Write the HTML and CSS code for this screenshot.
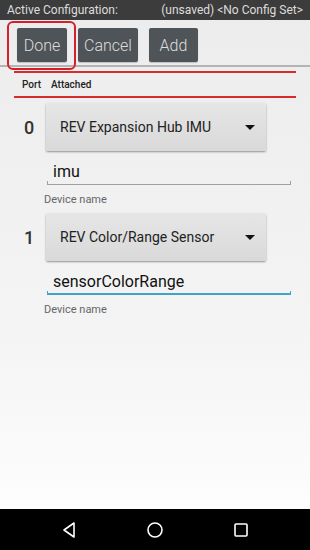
FILE: index.html
```html
<!DOCTYPE html>
<html>
<head>
<meta charset="utf-8">
<link rel="stylesheet" href="styles.css">
</head>
<body>
<div class="screen">
  <div class="statusbar">
    <span>Active Configuration:</span>
    <span>(unsaved) &lt;No Config Set&gt;</span>
  </div>
  <div class="toolbar">
    <button class="btn btn-done">Done</button>
    <button class="btn btn-cancel">Cancel</button>
    <button class="btn btn-add">Add</button>
    <div class="highlight"></div>
  </div>
  <div class="divider"></div>
  <div class="header">
    <div class="redline"></div>
    <div class="cols"><span class="col-port">Port</span><span>Attached</span></div>
    <div class="redline"></div>
  </div>
  <div class="content">
    <div class="row">
      <div class="line">
        <div class="port">0</div>
        <div class="spinner"><span>REV Expansion Hub IMU</span><span class="arrow"></span></div>
      </div>
      <div class="edit">imu</div>
      <div class="hint">Device name</div>
    </div>
    <div class="row">
      <div class="line">
        <div class="port">1</div>
        <div class="spinner"><span>REV Color/Range Sensor</span><span class="arrow"></span></div>
      </div>
      <div class="edit focused">sensorColorRange</div>
      <div class="hint">Device name</div>
    </div>
  </div>
  <div class="navbar">
    <svg class="nav-icon" width="16" height="18" viewBox="0 0 16 18"><path d="M13 2 L3 9 L13 16 Z" fill="none" stroke="#fff" stroke-width="1.6" stroke-linejoin="round"/></svg>
    <svg class="nav-icon" width="18" height="18" viewBox="0 0 18 18"><circle cx="9" cy="9" r="7" fill="none" stroke="#fff" stroke-width="1.6"/></svg>
    <svg class="nav-icon" width="16" height="16" viewBox="0 0 16 16"><rect x="2" y="2" width="12" height="12" rx="1" fill="none" stroke="#fff" stroke-width="1.6"/></svg>
  </div>
</div>
</body>
</html>
```
FILE: styles.css
```css
* { box-sizing: border-box; }
html, body { margin: 0; padding: 0; }
body { font-family: Roboto, "Liberation Sans", sans-serif; }
.screen {
  width: 310px; height: 550px;
  display: flex; flex-direction: column;
  background: linear-gradient(#ececec, #f4f4f4 60%, #ffffff);
  overflow: hidden;
}
.statusbar {
  height: 20px; background: #3c3c3c; color: #dcdcdc;
  font-size: 12px; display: flex; justify-content: space-between; align-items: center;
  padding: 0 7px 0 7px;
}
.toolbar {
  position: relative;
  height: 45px; padding: 8px 0 0 17px;
  display: flex; gap: 11px; align-items: flex-start;
}
.btn {
  height: 34px; border: none; border-radius: 2px;
  background: #4f5458; color: #dedede;
  font-family: Roboto, "Liberation Sans", sans-serif; font-size: 16px; font-weight: 300;
  padding: 0; box-shadow: 0 1px 1px rgba(0,0,0,0.2);
}
.btn-done { width: 50px; }
.btn-cancel { width: 60px; }
.btn-add { width: 49px; }
.highlight {
  position: absolute; left: 7px; top: 1px; width: 69px; height: 49px;
  border: 2px solid #d3202e; border-radius: 6px;
}
.divider { height: 2px; background: #b4b4b4; }
.header { padding: 4px 14px 0 14px; }
.redline { height: 2px; background: #d82a2f; }
.cols {
  height 23px; height: 23px; display: flex; align-items: center;
  font-size: 10px; font-weight: 500; color: #222; padding-left: 8px;
}
.col-port { width: 29px; }
.content { flex: 1; padding-top: 5px; }
.row { height: 110px; }
.line { display: flex; align-items: center; }
.port {
  width: 46px; padding-left: 24px;
  font-size: 18px; font-weight: 500; color: #333;
}
.spinner {
  width: 220px; height: 48px;
  background: linear-gradient(#e6e6e6, #d9d9d9);
  box-shadow: 0 1px 2px rgba(0,0,0,0.4);
  border-radius: 2px;
  display: flex; align-items: center; justify-content: space-between;
  padding: 0 11px 0 14px;
  font-size: 14px; color: #222;
}
.arrow {
  width: 0; height: 0;
  border-left: 5px solid transparent; border-right: 5px solid transparent;
  border-top: 5px solid #111;
}
.edit {
  margin: 12px 0 0 47px; width: 244px; height: 22px;
  padding-left: 6px; font-size: 16px; line-height: 18px; color: #111;
  border-bottom: 1px solid #a0a0a0;
  position: relative;
}
.edit::before, .edit::after {
  content: ""; position: absolute; bottom: -1px; width: 1px; height: 4px; background: #a0a0a0;
}
.edit::before { left: 0; }
.edit::after { right: 0; }
.edit.focused { border-bottom: 2px solid #3aa6c8; }
.edit.focused::before, .edit.focused::after { background: #3aa6c8; bottom: -2px; }
.hint {
  margin: 8px 0 0 44px; font-size: 11px; color: #666;
}
.navbar {
  height: 41px; background: #000;
  display: flex; align-items: center; justify-content: space-between;
  padding: 0 61px 0 61px;
}
```
